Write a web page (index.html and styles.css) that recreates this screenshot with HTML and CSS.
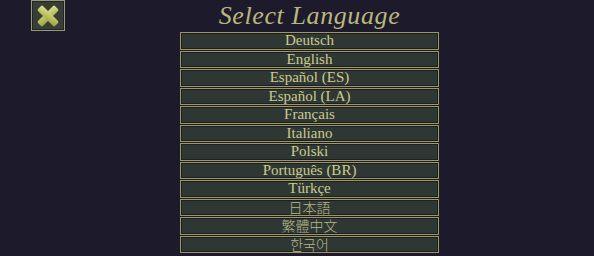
FILE: index.html
```html
<!DOCTYPE html>
<html lang="en">
<head>
<meta charset="utf-8">
<title>Select Language</title>
<link rel="stylesheet" href="styles.css">
</head>
<body>
<div class="page">
  <button class="close" aria-label="Close">
    <svg width="24" height="24" viewBox="0 0 22 22">
      <defs>
        <linearGradient id="g" x1="0" y1="0" x2="1" y2="1">
          <stop offset="0" stop-color="#dfe38c"/>
          <stop offset="1" stop-color="#98a03e"/>
        </linearGradient>
      </defs>
      <g transform="rotate(45 11 11)">
        <rect x="7.8" y="0" width="6.4" height="22" rx="1.5" fill="url(#g)"/>
        <rect x="0" y="7.8" width="22" height="6.4" rx="1.5" fill="url(#g)"/>
      </g>
    </svg>
  </button>
  <div class="panel">
    <h1 class="title">Select Language</h1>
    <ul class="langs">
      <li class="lang">Deutsch</li>
      <li class="lang">English</li>
      <li class="lang">Español (ES)</li>
      <li class="lang">Español (LA)</li>
      <li class="lang">Français</li>
      <li class="lang">Italiano</li>
      <li class="lang">Polski</li>
      <li class="lang">Português (BR)</li>
      <li class="lang">Türkçe</li>
      <li class="lang cjk">日本語</li>
      <li class="lang cjk">繁體中文</li>
      <li class="lang cjk">한국어</li>
    </ul>
  </div>
</div>
</body>
</html>
```
FILE: styles.css
```css
html, body {
  margin: 0;
  padding: 0;
  background: #1d1a2b;
  width: 594px;
  height: 256px;
  overflow: hidden;
}
.page {
  display: flex;
  align-items: flex-start;
  padding-left: 31px;
}
.close {
  width: 34px;
  height: 31px;
  margin: 0;
  padding: 0;
  background: #383d36;
  border: 1px solid #9a9878;
  box-shadow: inset 0 0 0 1px #22261f;
  display: flex;
  align-items: center;
  justify-content: center;
}
.panel {
  margin-left: 115px;
  width: 259px;
  display: flex;
  flex-direction: column;
}
.title {
  margin: 0;
  height: 32px;
  font-family: "Liberation Serif", serif;
  font-style: italic;
  font-weight: normal;
  font-size: 26px;
  line-height: 31px;
  color: #b8b87c;
  text-align: center;
  letter-spacing: 0.6px;
}
.langs {
  list-style: none;
  margin: 0;
  padding: 0;
  display: flex;
  flex-direction: column;
  gap: 1px;
}
.lang {
  box-sizing: border-box;
  height: 17.5px;
  border: 1px solid #9c9866;
  box-shadow: inset 0 0 0 1px #1c211d;
  background: #2e3733;
  color: #cdca8e;
  font-family: "Liberation Serif", serif;
  font-size: 15px;
  line-height: 15px;
  text-align: center;
}
.cjk {
  font-family: "Noto Sans CJK JP", "Noto Sans CJK KR", sans-serif;
  font-size: 14px;
  font-weight: 300;
  color: #b8b585;
}
```
